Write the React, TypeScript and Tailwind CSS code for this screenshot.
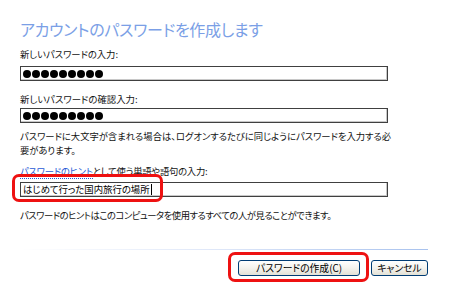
import React from "react";

const font = { fontFamily: '"Noto Sans CJK JP", "Noto Sans", sans-serif' };

function Dots() {
  return (
    <div className="flex items-center gap-[1px] pl-[2px]">
      {Array.from({ length: 9 }).map((_, i) => (
        <span key={i} className="block w-[8px] h-[8px] rounded-full bg-black" />
      ))}
    </div>
  );
}

function Field({ children }: { children?: React.ReactNode }) {
  return (
    <div className="w-[368px] h-[15px] border border-[#404040] bg-white shadow-[inset_-1px_-1px_0_#c8c8c8] flex items-center">
      {children}
    </div>
  );
}

function XPButton({ label, width }: { label: string; width: string }) {
  return (
    <button
      className={`${width} h-[16px] rounded-[3px] border border-[#003c74] bg-gradient-to-b from-white via-[#f4f3ee] to-[#e3e1d6] text-[9.8px] leading-[14px] text-black flex items-center justify-center whitespace-nowrap`}
      style={font}
    >
      {label}
    </button>
  );
}

export default function App() {
  return (
    <div className="w-[450px] h-[297px] bg-white overflow-hidden relative [font-feature-settings:'palt']" style={font}>
      <div className="flex flex-col pl-[20px]">
        <h1 className="pt-[20px] text-[16px] leading-[18px] text-[#7b9fe6] font-normal tracking-[-0.3px]">
          アカウントのパスワードを作成します
        </h1>

        <label className="mt-[9px] text-[9.3px] leading-[14px] text-[#111] whitespace-nowrap">新しいパスワードの入力:</label>
        <div className="mt-[5px]">
          <Field>
            <Dots />
          </Field>
        </div>

        <label className="mt-[11px] text-[9.4px] leading-[14px] text-[#111] whitespace-nowrap">新しいパスワードの確認入力:</label>
        <div className="mt-[2px]">
          <Field>
            <Dots />
          </Field>
        </div>

        <p className="mt-[6px] text-[9.3px] leading-[14px] text-[#111] whitespace-nowrap">
          パスワードに大文字が含まれる場合は、ログオンするたびに同じようにパスワードを入力する必
          <br />
          要があります。
        </p>

        <label className="mt-[7px] text-[9.3px] leading-[14px] text-[#111] whitespace-nowrap tracking-[-0.2px]">
          <span className="text-[#2a5ad6] border-b border-dotted border-[#2a5ad6]">パスワードのヒント</span>
          として使う単語や語句の入力:
        </label>
        <div className="mt-[4px]">
          <Field>
            <span className="pl-[2px] text-[9.4px] leading-[13px] text-black whitespace-nowrap">はじめて行った国内旅行の場所</span>
            <span className="ml-[1px] block w-[1px] h-[11px] bg-black" />
          </Field>
        </div>

        <p className="mt-[11px] text-[9.3px] leading-[14px] text-[#111] whitespace-nowrap tracking-[-0.45px]">
          パスワードのヒントはこのコンピュータを使用するすべての人が見ることができます。
        </p>

        <div className="mt-[27px] w-[408px] h-[1px] bg-gradient-to-r from-white via-[#dde6f8] to-[#a8c2ee]" />

        <div className="mt-[10px] w-[408px] flex justify-end gap-[11px]">
          <XPButton label="パスワードの作成(C)" width="w-[122px]" />
          <XPButton label="キャンセル" width="w-[57px]" />
        </div>
      </div>

      {/* red annotation marks */}
      <div className="absolute left-[12px] top-[174px] w-[151px] h-[28px] border-[3px] border-[#ee1111] rounded-[7px] pointer-events-none" />
      <div className="absolute left-[228px] top-[252px] w-[141px] h-[30px] border-[3px] border-[#ee1111] rounded-[7px] pointer-events-none" />
    </div>
  );
}
